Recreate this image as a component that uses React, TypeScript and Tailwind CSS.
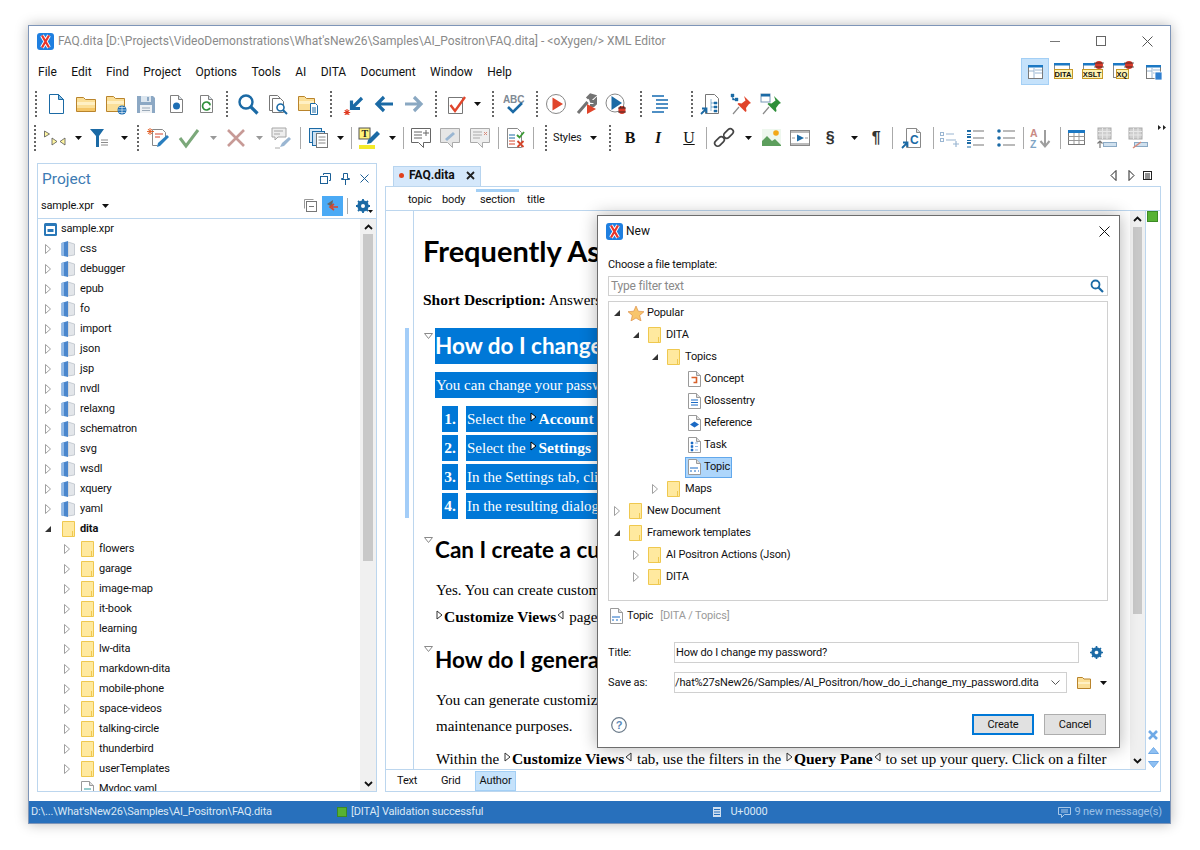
import React from "react";

type P = { children?: React.ReactNode; className?: string };
const S = ({ w = 22, h = 22, children }: { w?: number; h?: number; children?: React.ReactNode }) => (
  <svg width={w} height={h} viewBox={`0 0 ${w} ${h}`} className="block shrink-0" fill="none">{children}</svg>
);
const Cell = ({ className = "w-[30px]", children }: P) => (
  <div className={`flex items-center justify-center shrink-0 h-full ${className}`}>{children}</div>
);
const Grip = ({ className = "w-[12px]" }: P) => (
  <Cell className={className}><div className="h-[26px] border-l-2 border-dotted border-[#666]" /></Cell>
);
const Sep = ({ className = "w-[4px]" }: P) => (
  <Cell className={className}><div className="h-[22px] w-px bg-[#aaaaaa]" /></Cell>
);
const Dd = () => <svg width="7" height="4" viewBox="0 0 7 4" className="block shrink-0"><path d="M0 0h7L3.5 4z" fill="#111" /></svg>;
const DdG = () => <svg width="7" height="4" viewBox="0 0 7 4" className="block shrink-0"><path d="M0 0h7L3.5 4z" fill="#999" /></svg>;

const Logo = () => (
  <S w={17} h={17}>
    <rect width="17" height="17" rx="3" fill="#1f7fe0" />
    <path d="M5 2.500 12 14.500M12 2.500 5 14.500" stroke="#fff" strokeWidth="4" />
    <path d="M5 2.500 12 14.500M12 2.500 5 14.500" stroke="#e8352a" strokeWidth="2.200" />
  </S>
);
const Folder = () => (
  <S w={20} h={16}>
    <path d="M.5 15.500V1.500h7l2 2h10v12z" fill="#fbdf98" stroke="#b9842c" />
    <path d="M1 6h18v3H1z" fill="#fff0c4" />
    <path d="M1 12h18v3H1z" fill="#f5c667" />
  </S>
);
const Doc = ({ children, s = "#808080" }: { children?: React.ReactNode; s?: string }) => (
  <S>
    <path d="M5.500 2.500h8l4 4v13h-12z" fill="#fff" stroke={s} />
    <path d="M13.500 2.500v4h4" fill="#dbe3ea" stroke={s} />
    {children}
  </S>
);
const New = () => (
  <S>
    <path d="M4.500 1.500h9l5 5v14h-14z" fill="#fff" stroke="#1b6aa5" />
    <path d="M13.500 1.500v5h5z" fill="#8bbde0" stroke="#1b6aa5" />
  </S>
);
const FolderWeb = () => (
  <S>
    <path d="M1.500 18.500V3.500h7l2 2h9v13z" fill="#fbdf98" stroke="#b9842c" />
    <path d="M2 8h17v3H2z" fill="#fff0c4" />
    <circle cx="17" cy="17" r="4.500" fill="#1e6fb4" />
    <path d="M13 17h8M17 13v8M14 14.500h6M14 19.500h6" stroke="#fff" strokeWidth=".6" />
  </S>
);
const Save = () => (
  <S>
    <path d="M2 3h16l2 2v15H2z" fill="#8ca8c4" />
    <rect x="6" y="3" width="10" height="6" fill="#dce6ef" />
    <rect x="12" y="4" width="2" height="4" fill="#8ca8c4" />
    <rect x="5" y="12" width="12" height="8" fill="#eef1f4" />
    <path d="M7 15h8M7 17.500h8" stroke="#9aa9b8" />
  </S>
);
const Search = () => (
  <S>
    <circle cx="9" cy="9" r="6.500" stroke="#1b6aa5" strokeWidth="2.400" fill="#fff" />
    <path d="m14 14 6.500 6.500" stroke="#1b6aa5" strokeWidth="3.200" />
  </S>
);
const DocSearch = () => (
  <S>
    <path d="M2.500 2.500h8l3 3v12h-11z" fill="#fff" stroke="#777" />
    <path d="M5.500 5.500h8l3 3v11h-11z" fill="#fff" stroke="#777" />
    <circle cx="13.500" cy="14.500" r="3.500" stroke="#1b6aa5" strokeWidth="1.600" fill="#fff" />
    <path d="m16 17 4 4" stroke="#1b6aa5" strokeWidth="2" />
  </S>
);
const FolderDoc = () => (
  <S>
    <path d="M1.500 17.500V3.500h6l2 2h8v12z" fill="#fbdf98" stroke="#b9842c" />
    <path d="M2 8h15v3H2z" fill="#fff0c4" />
    <path d="M13.500 10.500h5l2 2v9h-7z" fill="#fff" stroke="#1b6aa5" />
    <path d="M15 15h4M15 17h4M15 19h4" stroke="#1b6aa5" />
  </S>
);
const ArrowIn = () => (
  <S>
    <path d="M19 5 9 15M8.500 7.500V15.500H17" stroke="#1b6aa5" strokeWidth="3.200" />
    <path d="M4 16v7M.8 19.500h6.400M1.800 17.200l4.400 4.600M6.200 17.200l-4.400 4.600" stroke="#e03a20" strokeWidth="1.100" />
  </S>
);
const ArrowH = ({ c, dir }: { c: string; dir: "l" | "r" }) => (
  <S>
    {dir === "l" ? (
      <path d="M20 11H5M11 4l-7 7 7 7" stroke={c} strokeWidth="3.200" />
    ) : (
      <path d="M2 11h15M11 4l7 7-7 7" stroke={c} strokeWidth="3.200" />
    )}
  </S>
);
const CheckDoc = () => (
  <S>
    <path d="M3.500 4.500h14v16h-14z" fill="#fff" stroke="#777" />
    <path d="m5.500 12 4.500 6 10-14" stroke="#e0452b" strokeWidth="2.400" />
  </S>
);
const Abc = () => (
  <S w={22} h={22}>
    <text x="0" y="9.500" fontFamily="Liberation Sans" fontWeight="700" fontSize="10" fill="#7f8a94">ABC</text>
    <path d="m5 14 5 5 9-9" stroke="#1b6aa5" strokeWidth="2.600" />
  </S>
);
const Play = ({ c = "#e0452b" }: { c?: string }) => (
  <S>
    <circle cx="11" cy="11" r="9.500" fill="#fff" stroke="#888" />
    <path d="M7.500 4.500 18 11 7.500 17.500z" fill={c} />
  </S>
);
const Wrench = () => (
  <S>
    <path d="M3 20 12.500 9M12 5.500 15.500 2l3.500 1-3.500 3 .8 2.300 2.500.4L21.500 6l.3 3.500-3.300 3H15" stroke="#737373" strokeWidth="3" />
    <path d="M12 11v10l9-5z" fill="#e0452b" />
  </S>
);
const PlayBug = () => (
  <S>
    <circle cx="10" cy="10" r="9" fill="#fff" stroke="#888" />
    <path d="M6.500 3 17 10 6.500 17z" fill="#1b6aa5" />
    <ellipse cx="17" cy="17" rx="3.600" ry="4" fill="#d83a2a" />
    <path d="M13 15h8M13 19h8M15 13l1 2M19 13l-1 2" stroke="#222" strokeWidth=".8" />
  </S>
);
const Indent = () => (
  <S>
    <path d="M3 3h12M7 7h12M7 11h12M7 15h12M3 19h12" stroke="#4f8fc4" strokeWidth="1.800" />
  </S>
);
const DocTree = () => (
  <S>
    <path d="M5.500 1.500h9l4 4v15h-13z" fill="#fff" stroke="#777" />
    <path d="M14 9h3v2h-3zM14 13h3v2h-3zM14 17h3v2h-3zM11 6v12M11 10h3M11 14h3" fill="#1b6aa5" stroke="#1b6aa5" strokeWidth=".5" />
    <path d="M1 21l5-5M2 15.500h4.500V20" stroke="#1b6aa5" strokeWidth="1.800" />
  </S>
);
const Pin = ({ c, top }: { c: string; top: "tree" | "win" }) => (
  <S>
    {top === "tree" ? (
      <path d="M1 1h3v3H1zM5 5h3v3H5zM2.500 4v3h3" fill="#1b6aa5" stroke="#1b6aa5" strokeWidth=".4" />
    ) : (
      <g><rect x="1" y="1" width="9" height="8" fill="#fff" stroke="#7797b6" /><rect x="1" y="1" width="9" height="2.500" fill="#1b6aa5" /></g>
    )}
    <path d="M14 3l7 7-2 1-3 4 .5 3-1 1-8-8 1-1 3 .5 4-3z" fill={c} />
    <path d="M9 14l-6 7" stroke="#8a8a8a" strokeWidth="1.200" />
  </S>
);
const Marks = () => (
  <S w={22} h={16}>
    <path d="M.5 1v6l5-3z" fill="#fff6a0" stroke="#555" strokeWidth=".8" />
    <path d="M8 8v7l5-3.500zM21 8v7l-5-3.500z" fill="#fff6a0" stroke="#555" strokeWidth=".8" />
  </S>
);
const Funnel = () => (
  <S w={24} h={20}>
    <path d="M1 1h14L10 8v11H7V8z" fill="#1b6aa5" />
    <path d="M12 12h7M12 14.500h7M12 17h7" stroke="#8a8a8a" />
  </S>
);
const EditDoc = () => (
  <S>
    <path d="M5.500 2.500h10l3 3v7M5.500 2.500v16h5" fill="#fff" stroke="#888" />
    <path d="M8 7h8M8 10h5" stroke="#d5452b" />
    <path d="m10 20 1-4 9-8 2 2-9 9z" fill="#2a7fbf" />
    <path d="M3 1v7M0 4.500h7M1 2l4 5M5 2 1 7" stroke="#e05a20" strokeWidth=".9" />
  </S>
);
const Check = ({ c }: { c: string }) => (
  <S><path d="m2 11 6 8L20 3" stroke={c} strokeWidth="3" /></S>
);
const Cross = ({ c }: { c: string }) => (
  <S><path d="m3 3 16 16M19 3 3 19" stroke={c} strokeWidth="2.600" /></S>
);
const CommentEdit = () => (
  <S>
    <path d="M1 1h14v9H7l-3 3v-3H1z" fill="#eee" stroke="#a6a6a6" />
    <path d="M3 4h9M3 7h6" stroke="#a6a6a6" />
    <path d="m9 20 2-4 7-6 2 2-7 7z" fill="#9ab6d2" />
    <path d="M4 21h5" stroke="#aaa" />
  </S>
);
const Copy = () => (
  <S>
    <rect x="1.500" y="1.500" width="12" height="14" fill="#dbe9f6" stroke="#1b6aa5" />
    <rect x="4.500" y="4.500" width="12" height="14" fill="#cfe2f3" stroke="#1b6aa5" />
    <rect x="8.500" y="6.500" width="11" height="14" fill="#fff" stroke="#777" />
    <path d="M10.500 10h7M10.500 13h7M10.500 16h7" stroke="#888" />
  </S>
);
const Highlight = () => (
  <S w={24} h={22}>
    <rect x="1" y="1" width="11" height="11" fill="#fff27a" stroke="#555" />
    <text x="3.500" y="10" fontFamily="Liberation Serif" fontWeight="700" fontSize="10" fill="#222">T</text>
    <path d="m9 17 1-4 9-9 3 3-9 9z" fill="#1b6aa5" />
    <rect x="1" y="18" width="16" height="4" fill="#f3ea2a" />
  </S>
);
const CommentBubble = ({ fill = "#fff", s = "#666", children }: { fill?: string; s?: string; children?: React.ReactNode }) => (
  <S>
    <path d="M1.500 1.500h19v14h-7v5l-5-5h-7z" fill={fill} stroke={s} />
    {children}
  </S>
);
const Review = () => (
  <S>
    <path d="M3.500 1.500h10l4 4v15h-14z" fill="#fff" stroke="#888" />
    <path d="M5 8h6M5 11h6" stroke="#1b6aa5" />
    <path d="M5 14h6M5 17h6" stroke="#d5452b" />
    <path d="m13 8 2.500 2.500L20 5" stroke="#3a9a35" strokeWidth="1.800" />
    <path d="m13.500 14 6 6M19.500 14l-6 6" stroke="#d5452b" strokeWidth="1.800" />
  </S>
);
const Link = () => (
  <S>
    <rect x="1" y="11.500" width="11" height="6" rx="3" transform="rotate(-45 6.500 14.500)" stroke="#444" strokeWidth="1.700" />
    <rect x="10" y="3.500" width="11" height="6" rx="3" transform="rotate(-45 15.500 6.500)" stroke="#444" strokeWidth="1.700" />
  </S>
);
const Img = () => (
  <S>
    <rect x="1" y="2" width="19" height="17" fill="#eef7ee" />
    <path d="M1 19v-5l5-5 5 5 3-2 6 6v1z" fill="#5c9e5c" />
    <circle cx="15" cy="6" r="2.800" fill="#f3a818" />
  </S>
);
const Video = () => (
  <S>
    <rect x="1.500" y="3.500" width="19" height="15" fill="#fff" stroke="#888" />
    <path d="M2 4h18v2H2zM2 16h18v2H2z" fill="#bbb" />
    <path d="m8 7.500 7 3.500-7 3.500z" fill="#1b6aa5" />
    <path d="M3 11h3M16 11h3" stroke="#999" />
  </S>
);
const DocC = () => (
  <S>
    <path d="M5.500 1.500h10l4 4v15h-14z" fill="#fff" stroke="#888" />
    <path d="M15.500 1.500v4h4" fill="#ddd" stroke="#888" />
    <text x="9" y="16.500" fontFamily="Liberation Sans" fontWeight="700" fontSize="12" fill="#1b6aa5">C</text>
    <path d="M1 21l5-5M2 15.500h4.500V20" stroke="#1b6aa5" strokeWidth="1.800" />
  </S>
);
const ListAdd = () => (
  <S>
    <rect x="2.500" y="5.500" width="3" height="3" stroke="#9ab6d2" />
    <rect x="2.500" y="11.500" width="3" height="3" stroke="#9ab6d2" />
    <path d="M8 7h8M8 13h10M15 17h6M18 14v6" stroke="#9ab6d2" strokeWidth="1.200" />
  </S>
);
const Ol = () => (
  <S>
    <path d="M2 3h4v2H2zM2 9h4v2H2zM2 15h4v2H2z" fill="#1b6aa5" />
    <path d="M8 4h11M8 11h11M8 18h11" stroke="#777" strokeWidth="1.200" />
    <path d="M2 7.500h4M2 13.500h4M2 20h4" stroke="#1b6aa5" />
  </S>
);
const Ul = () => (
  <S>
    <circle cx="4" cy="4" r="1.800" fill="#1b6aa5" />
    <circle cx="4" cy="11" r="1.800" fill="#1b6aa5" />
    <circle cx="4" cy="18" r="1.800" fill="#1b6aa5" />
    <path d="M8 4h12M8 11h12M8 18h12" stroke="#777" strokeWidth="1.200" />
  </S>
);
const Sort = () => (
  <S>
    <text x="1" y="9.500" fontFamily="Liberation Sans" fontWeight="700" fontSize="10.500" fill="#c98a84">A</text>
    <text x="1" y="20.500" fontFamily="Liberation Sans" fontWeight="700" fontSize="10.500" fill="#7ea4c4">Z</text>
    <path d="M16 3v16M11.500 14l4.500 5.500 4.500-5.500" stroke="#9e9e9e" strokeWidth="2" />
  </S>
);
const Table = () => (
  <S>
    <rect x="2.500" y="3.500" width="16" height="14" fill="#fff" stroke="#777" />
    <rect x="2" y="3" width="17" height="3" fill="#1b78c4" />
    <path d="M2.500 9.500h16M2.500 13.500h16M8 6v11M13 6v11" stroke="#999" />
  </S>
);
const TblGray = ({ bar }: { bar: "add" | "del" }) => (
  <S>
    <rect x="2" y="1" width="13" height="11" fill="#cfcfcf" stroke="#aaa" />
    <path d="M2 4.500h13M2 8h13M6.500 1v11M11 1v11" stroke="#e8e8e8" />
    <rect x="7.500" y="15.500" width="13" height="4" fill="#cfe0ee" stroke="#8aa9c4" />
    {bar === "add" ? (
      <path d="M4 21v-7M1.500 16.500 4 14l2.500 2.500" stroke="#777" strokeWidth="1.200" />
    ) : (
      <path d="m6 21 8-6" stroke="#d98a7a" strokeWidth="1.500" />
    )}
  </S>
);
const Persp = ({ db }: { db?: boolean }) => (
  <S w={20} h={18}>
    <rect x="3.500" y="2.500" width="14" height="13" fill="#fff" stroke="#7a7a7a" />
    <rect x="3" y="2" width="15" height="2.500" fill="#1b78c4" />
    <path d="M9 5v10M10 7h7M10 10h7M4 8h5" stroke="#9ab6d2" />
    {db && <path d="M12 9h7v8h-7z" fill="#2f7fd0" stroke="#fff" strokeWidth=".8" />}
  </S>
);
const Label = ({ t, w, bug }: { t: string; w: number; bug?: boolean }) => (
  <svg width="30" height="22" viewBox="0 0 30 22" className="block shrink-0 tracking-normal" fill="none">
    <rect x="6.500" y="2.500" width="15" height="14" fill="#fff" stroke="#888" />
    <rect x="6" y="2" width="16" height="2.500" fill="#1b78c4" />
    <rect x={15 - w / 2 + .5} y="8.500" width={w} height="9" fill="#fff2b0" stroke="#c79a28" />
    <text x="15" y="16" textAnchor="middle" fontFamily="Liberation Sans" fontWeight="700" fontSize="7.500" fill="#111">{t}</text>
    {bug && <g><ellipse cx="22" cy="4" rx="4" ry="4" fill="#d83a2a" /><path d="M17 2h10M17 6h10" stroke="#222" strokeWidth=".7" /></g>}
  </svg>
);

const TreeArrow = ({ open }: { open?: boolean }) =>
  open ? (
    <svg width="10" height="10" viewBox="0 0 10 10" className="block shrink-0"><path d="M8 2v6H2z" fill="#333" /></svg>
  ) : (
    <svg width="10" height="12" viewBox="0 0 10 12" className="block shrink-0"><path d="M2.500 1.500v9l5-4.500z" fill="#fff" stroke="#a0a0a0" /></svg>
  );
const BlueFolder = () => (
  <svg width="14" height="16" viewBox="0 0 14 16" className="block shrink-0">
    <path d="M7 1 13.500 3v11L7 15z" fill="#e3e6ea" stroke="#b5bcc4" strokeWidth=".7" />
    <path d="M.5 2 7 0v16L.5 14.500z" fill="#4a86cc" />
    <path d="M.5 2 3 1.300v13.800L.5 14.500z" fill="#8fb8e6" />
  </svg>
);
const YFolder = () => (
  <svg width="13" height="16" viewBox="0 0 13 16" className="block shrink-0">
    <path d="M.5.500h12v15H.5z" fill="#ffe99f" stroke="#efc84f" />
    <path d="M10.500 10v5.500" stroke="#efc84f" />
  </svg>
);
const MiniDoc = ({ children }: P) => (
  <svg width="13" height="16" viewBox="0 0 13 16" className="block shrink-0" fill="none">
    <path d="M.5.500h8l4 4v11H.5z" fill="#fff" stroke="#9a9a9a" />
    <path d="M8.500.500v4h4" fill="#ddd" stroke="#9a9a9a" />
    {children}
  </svg>
);

const folders = ["css","debugger","epub","fo","import","json","jsp","nvdl","relaxng","schematron","svg","wsdl","xquery","yaml"];
const subs = ["flowers","garage","image-map","it-book","learning","lw-dita","markdown-dita","mobile-phone","space-videos","talking-circle","thunderbird","userTemplates"];

const Mk = ({ dir = "r", fill = "#fff", s = "#333" }: { dir?: "l" | "r"; fill?: string; s?: string }) => (
  <svg width="7" height="11" viewBox="0 0 7 11" className="inline-block align-[1px] mx-[1px]">
    <path d={dir === "r" ? "M1 1v8l5-4z" : "M6 1v8L1 5z"} fill={fill} stroke={s} />
  </svg>
);
const Tri = () => (
  <div className="w-[11px] shrink-0 pt-[5px]">
    <svg width="9" height="6" viewBox="0 0 9 6" className="block"><path d="M.5.500h8L4.500 5.500z" fill="#fff" stroke="#8a8a8a" /></svg>
  </div>
);
const Num = ({ n, children }: { n: string; children: React.ReactNode }) => (
  <div className="flex h-[26px] ml-[19px] text-white leading-[26px] whitespace-nowrap">
    <div className="w-[16px] bg-[#0078d7] font-bold text-[15.500px] shrink-0 text-center">{n}</div>
    <div className="ml-[8px] w-[500px] bg-[#0078d7] pl-px">{children}</div>
  </div>
);

export default function App() {
  const ui = "font-['Segoe_UI','Roboto',sans-serif]";
  const h = "font-['Lato',sans-serif] font-bold";
  return (
    <div className={`relative w-[1200px] h-[850px] bg-white pt-[25px] pl-[28px] overflow-hidden text-[11px] leading-[18px] tracking-[-0.15px] text-[#111] ${ui}`}>
      <div className="w-[1143px] h-[799px] border border-[#7e95b8] bg-white flex flex-col shadow-[0_0_12px_rgba(0,0,0,0.28)]">
        {/* title */}
        <div className="h-[30px] flex items-center shrink-0 pl-[8px]">
          <Logo />
          <span className="ml-[4px] text-[12px] tracking-normal text-[#8a8a8a] whitespace-nowrap">FAQ.dita [D:\Projects\VideoDemonstrations\What'sNew26\Samples\AI_Positron\FAQ.dita] - &lt;oXygen/&gt; XML Editor</span>
          <div className="ml-auto flex items-center h-full">
            <Cell className="w-[46px]"><div className="w-[10px] h-px bg-[#777]" /></Cell>
            <Cell className="w-[46px]"><div className="w-[10px] h-[10px] border border-[#666]" /></Cell>
            <Cell className="w-[46px]"><svg width="11" height="11" viewBox="0 0 11 11"><path d="m.5.500 10 10M10.500.500l-10 10" stroke="#555" /></svg></Cell>
          </div>
        </div>
        {/* menu */}
        <div className="h-[31px] flex items-center shrink-0 pl-[9px] relative">
          <div className="flex gap-[14.400px] text-[12px] tracking-normal">
            {["File","Edit","Find","Project","Options","Tools","AI","DITA","Document","Window","Help"].map((m) => <span key={m}>{m}</span>)}
          </div>
          <div className="ml-auto flex items-center h-full pr-[2px]">
            <div className="w-[28px] h-[27px] bg-[#c5e2fb] border border-[#a3cff5] flex items-center justify-center"><Persp /></div>
            <Cell className="w-[28px]"><Label t="DITA" w={18} /></Cell>
            <Cell className="w-[30px]"><Label t="XSLT" w={20} bug /></Cell>
            <Cell className="w-[30px]"><Label t="XQ" w={12} bug /></Cell>
            <Cell className="w-[31px]"><Persp db /></Cell>
          </div>
        </div>
        {/* toolbar 1 */}
        <div className="h-[30px] mt-[2px] flex items-center shrink-0 pl-[2px]">
          <Grip className="w-[10px]" />
          <Cell><New /></Cell>
          <Cell><Folder /></Cell>
          <Cell><FolderWeb /></Cell>
          <Cell><Save /></Cell>
          <Cell><Doc><circle cx="11.500" cy="13" r="3.500" fill="#1e6fb4" /></Doc></Cell>
          <Cell><Doc><path d="M15 11a4 4 0 1 0 0 4" stroke="#2f8f3a" strokeWidth="1.700" /><path d="m13 10 3 1-1 2z" fill="#2f8f3a" /></Doc></Cell>
          <Grip />
          <Cell><Search /></Cell>
          <Cell><DocSearch /></Cell>
          <Cell><FolderDoc /></Cell>
          <Grip className="w-[16px]" />
          <Cell><ArrowIn /></Cell>
          <Cell><ArrowH c="#1b6aa5" dir="l" /></Cell>
          <Cell><ArrowH c="#8aa8c2" dir="r" /></Cell>
          <Grip className="w-[14px]" />
          <Cell className="w-[26px]"><CheckDoc /></Cell>
          <Cell className="w-[16px]"><Dd /></Cell>
          <Grip className="w-[16px]" />
          <Cell className="w-[26px]"><Abc /></Cell>
          <Grip className="w-[8px] ml-[6px]" />
          <Cell><Play /></Cell>
          <Cell><Wrench /></Cell>
          <Cell><PlayBug /></Cell>
          <Grip className="w-[9px] ml-[5px]" />
          <Cell><Indent /></Cell>
          <Grip className="w-[9px] ml-[12px]" />
          <Cell><DocTree /></Cell>
          <Cell><Pin c="#e0452b" top="tree" /></Cell>
          <Cell><Pin c="#2f8f3a" top="win" /></Cell>
        </div>
        {/* toolbar 2 */}
        <div className="h-[30px] mt-[4px] flex items-center shrink-0 pl-[1px]">
          <Grip className="w-[10px]" />
          <Cell className="w-[30px]"><Marks /></Cell>
          <Cell className="w-[16px]"><Dd /></Cell>
          <Cell className="w-[30px]"><Funnel /></Cell>
          <Cell className="w-[17px]"><Dd /></Cell>
          <Grip className="w-[10px]" />
          <Cell className="w-[30px]"><EditDoc /></Cell>
          <Cell className="w-[32px]"><Check c="#7ba87a" /></Cell>
          <Cell className="w-[16px]"><DdG /></Cell>
          <Cell className="w-[29px]"><Cross c="#c79a96" /></Cell>
          <Cell className="w-[18px]"><DdG /></Cell>
          <Cell className="w-[28px]"><CommentEdit /></Cell>
          <Sep className="w-[8px]" />
          <Cell className="w-[30px]"><Copy /></Cell>
          <Cell className="w-[12px]"><Dd /></Cell>
          <Sep className="w-[10px]" />
          <Cell className="w-[28px]"><Highlight /></Cell>
          <Cell className="w-[16px]"><Dd /></Cell>
          <Sep className="w-[6px]" />
          <Cell className="w-[29px]"><CommentBubble><path d="M4 5h8M4 8h8M4 11h8M16 3v6M13 6h6" stroke="#666" /></CommentBubble></Cell>
          <Cell><CommentBubble fill="#e6e6e6" s="#aaa"><path d="m6 12 8-7 2 2-8 7z" fill="#9ab6d2" /></CommentBubble></Cell>
          <Cell><CommentBubble fill="#eee" s="#aaa"><path d="M4 5h9M4 8h9M4 11h7" stroke="#aaa" /><path d="m15 5 3 3M18 5l-3 3" stroke="#d98a7a" /></CommentBubble></Cell>
          <Sep className="w-[6px]" />
          <Cell className="w-[28px]"><Review /></Cell>
          <Sep className="w-[8px]" />
          <Grip className="w-[18px]" />
          <Cell className="w-[33px] -ml-[2px] justify-start"><span>Styles</span></Cell>
          <Cell className="w-[14px]"><Dd /></Cell>
          <Grip className="w-[20px]" />
          <Cell className="w-[20px]"><span className="font-['Liberation_Serif',serif] font-bold text-[16px]">B</span></Cell>
          <Cell className="w-[36px]"><span className="font-['Liberation_Serif',serif] italic text-[16px] font-semibold">I</span></Cell>
          <Cell className="w-[26px]"><span className="font-['Liberation_Serif',serif] underline text-[16px]">U</span></Cell>
          <Sep className="w-[8px]" />
          <Cell className="w-[28px]"><Link /></Cell>
          <Cell className="w-[20px]"><Dd /></Cell>
          <Cell className="w-[27px]"><Img /></Cell>
          <Cell><Video /></Cell>
          <Cell className="w-[30px]"><span className="font-['Liberation_Sans',sans-serif] font-bold text-[16px] text-[#333]">§</span></Cell>
          <Cell className="w-[18px]"><Dd /></Cell>
          <Cell className="w-[26px]"><span className="font-['Liberation_Sans',sans-serif] font-bold text-[16px] text-[#333]">¶</span></Cell>
          <Sep className="w-[6px]" />
          <Cell className="w-[34px]"><DocC /></Cell>
          <Sep className="w-[8px]" />
          <Cell className="w-[24px]"><ListAdd /></Cell>
          <Cell><Ol /></Cell>
          <Cell><Ul /></Cell>
          <Sep className="w-[4px]" />
          <Cell className="w-[30px]"><Sort /></Cell>
          <Sep className="w-[10px]" />
          <Cell className="w-[24px]"><Table /></Cell>
          <Cell className="w-[36px]"><TblGray bar="add" /></Cell>
          <Cell className="w-[26px]"><TblGray bar="del" /></Cell>
          <Cell className="w-[22px] items-start"><svg width="8" height="5" viewBox="0 0 8 5" className="mt-[2px]"><path d="M0 0v5l3-2.500zM5 0v5l3-2.500z" fill="#222" /></svg></Cell>
        </div>
        {/* main */}
        <div className="flex-1 min-h-0 flex mt-[10px] pb-[9px] pl-[8px]">
          {/* project */}
          <div className="w-[340px] h-full border border-[#bcd6ee] flex flex-col shrink-0">
            <div className="h-[29px] flex items-center pl-[4px] shrink-0">
              <span className="text-[15.500px] tracking-normal text-[#3d7bb3]">Project</span>
              <div className="ml-auto flex items-center gap-[9px] pr-[7px]">
                <svg width="11" height="11" viewBox="0 0 11 11" fill="none"><rect x=".5" y="3.500" width="7" height="7" stroke="#1b5f96" /><path d="M3.500 2V.5h7v7H9" stroke="#1b5f96" /></svg>
                <svg width="11" height="12" viewBox="0 0 11 12" fill="none"><path d="M3.500.5h4v5h2v1h-8v-1h2zM5.500 7v5" stroke="#1b5f96" /></svg>
                <svg width="9" height="9" viewBox="0 0 9 9" fill="none"><path d="m.5.500 8 8M8.500.500l-8 8" stroke="#1b5f96" /></svg>
              </div>
            </div>
            <div className="h-[26px] flex items-center pl-[3px] border-b border-[#bcd6ee] shrink-0">
              <span>sample.xpr</span>
              <span className="ml-[8px]"><Dd /></span>
              <div className="ml-auto flex items-center pr-[3px]">
                <svg width="13" height="13" viewBox="0 0 13 13" fill="none"><path d="M.5 9.500V.5h9" stroke="#999" /><rect x="2.500" y="2.500" width="10" height="10" fill="#fff" stroke="#777" /><path d="M5 7.500h5" stroke="#777" /></svg>
                <div className="ml-[5px] w-[21px] h-[20px] bg-[#4baaf5] flex items-center justify-center">
                  <svg width="13" height="13" viewBox="0 0 13 13"><path d="M7 1 1 5l5 3z" fill="#666" /><path d="M12 8H6M8 5 4 8l4 3" stroke="#d8452b" strokeWidth="1.600" fill="none" /></svg>
                </div>
                <div className="ml-[4px] h-[16px] w-px bg-[#aaa]" />
                <div className="ml-[8px] w-[17px] relative">
                  <svg width="17" height="14" viewBox="0 0 17 14"><circle cx="7" cy="7" r="4" fill="none" stroke="#1b6aa5" strokeWidth="3.500" /><path d="M7 0v14M0 7h14M2 2l10 10M12 2 2 12" stroke="#1b6aa5" strokeWidth="1.800" /><circle cx="7" cy="7" r="2" fill="#fff" /><path d="M12 11h5l-2.500 3z" fill="#111" /></svg>
                </div>
              </div>
            </div>
            <div className="flex-1 min-h-0 flex">
              <div className="flex-1 min-w-0 overflow-hidden">
                <div className="h-[20px] flex items-center pl-[6px]">
                  <svg width="13" height="13" viewBox="0 0 13 13" className="shrink-0"><rect width="13" height="13" rx="1.500" fill="#2a78b8" /><rect x="2" y="3" width="9" height="8" fill="#fff" /><rect x="3.500" y="6" width="6" height="3" fill="#2a78b8" /></svg>
                  <span className="ml-[4px]">sample.xpr</span>
                </div>
                {folders.map((f) => (
                  <div key={f} className="h-[20px] flex items-center pl-[5px]">
                    <TreeArrow />
                    <div className="ml-[8px]"><BlueFolder /></div>
                    <span className="ml-[5px]">{f}</span>
                  </div>
                ))}
                <div className="h-[20px] flex items-center pl-[5px]">
                  <TreeArrow open />
                  <div className="ml-[9px]"><YFolder /></div>
                  <span className="ml-[5px] font-bold">dita</span>
                </div>
                {subs.map((f) => (
                  <div key={f} className="h-[20px] flex items-center pl-[24px]">
                    <TreeArrow />
                    <div className="ml-[9px]"><YFolder /></div>
                    <span className="ml-[5px]">{f}</span>
                  </div>
                ))}
                <div className="h-[20px] flex items-center pl-[43px]">
                  <MiniDoc><path d="M3 8h7M3 10.500h7M3 13h7" stroke="#2a9a9a" /></MiniDoc>
                  <span className="ml-[5px]">Mydoc.yaml</span>
                </div>
              </div>
              <div className="w-[16px] bg-[#f0f0f0] flex flex-col items-center shrink-0">
                <div className="h-[15px] flex items-center"><svg width="9" height="6" viewBox="0 0 9 6"><path d="m1 5 3.500-3.500L8 5" fill="none" stroke="#111" strokeWidth="1.800" /></svg></div>
                <div className="w-[10px] h-[327px] bg-[#c8c8c8]" />
                <div className="mt-auto h-[15px] flex items-center"><svg width="9" height="6" viewBox="0 0 9 6"><path d="m1 1 3.500 3.500L8 1" fill="none" stroke="#111" strokeWidth="1.800" /></svg></div>
              </div>
            </div>
          </div>
          {/* editor */}
          <div className="ml-[8px] w-[776px] h-full flex flex-col shrink-0">
            <div className="h-[23px] shrink-0 flex pl-[8px]">
              <div className="mt-[3px] w-[88px] h-[20px] bg-[#d5e8fb] border border-b-0 border-[#b7d4ef] flex items-center pl-[5px] pb-[3px]">
                <div className="w-[5px] h-[5px] rounded-full bg-[#e0401c]" />
                <span className="ml-[5px] font-bold text-[12px] tracking-normal">FAQ.dita</span>
                <svg width="9" height="9" viewBox="0 0 9 9" className="ml-[11px]"><path d="m1 1 7 7M8 1 1 8" stroke="#222" strokeWidth="1.800" /></svg>
              </div>
              <div className="ml-auto flex items-center pr-[9px] pt-[1px]">
                <svg width="7" height="11" viewBox="0 0 7 11"><path d="M6 .5v10L1 5.500z" fill="#fff" stroke="#222" /></svg>
                <svg width="7" height="11" viewBox="0 0 7 11" className="ml-[11px]"><path d="M1 .5v10L6 5.500z" fill="#fff" stroke="#222" /></svg>
                <svg width="9" height="9" viewBox="0 0 9 9" fill="none" className="ml-[8px]"><rect x=".5" y=".5" width="8" height="8" stroke="#222" /><path d="M2 3h5M2 5h5M2 7h5" stroke="#222" /></svg>
              </div>
            </div>
            <div className="flex-1 min-h-0 border border-[#bcd6ee] flex flex-col">
              <div className="h-[24px] shrink-0 border-b border-[#bcd6ee] flex items-end pl-[22px] pb-[1px]">
                <span className="w-[34px]">topic</span>
                <span className="w-[34px]">body</span>
                <div className="w-[43px] flex flex-col items-center relative">
                  <div className="absolute -top-[2px] left-0 w-[43px] h-[3px] bg-[#a3cff5]" />
                  <span>section</span>
                </div>
                <span className="ml-[8px]">title</span>
              </div>
              <div className="flex-1 min-h-0 flex">
                <div className="flex-1 min-w-0 flex border-r border-[#bcd6ee] border-b">
                  <div className="flex-1 min-w-0 flex overflow-hidden">
                    <div className="w-[28px] shrink-0 border-r border-[#bcd6ee]">
                      <div className="ml-[19px] mt-[117px] w-[4px] h-[190px] bg-[#a3cdf8]" />
                    </div>
                    <div className="flex-1 min-w-0 pl-[10px] font-['Liberation_Serif',serif] text-[15px] [&_b]:text-[15.500px] tracking-normal text-black whitespace-nowrap overflow-hidden">
                      <div className={`mt-[23px] -ml-px h-[34px] leading-[34px] text-[29px] ${h}`}>Frequently Asked Questions</div>
                      <div className="mt-[22px] -ml-px h-[20px] leading-[20px]"><b>Short Description:</b> Answers to common questions.</div>
                      <div className="mt-[18px] flex">
                        <Tri />
                        <div className={`w-[500px] h-[36px] leading-[35px] bg-[#0078d7] text-white text-[22.500px] ${h}`}>How do I change my password?</div>
                      </div>
                      <div className="mt-[8px] ml-[11px] w-[500px] h-[26px] leading-[26px] bg-[#0078d7] text-white pl-px">You can change your password.</div>
                      <div className="mt-[8px] -ml-px"><Num n="1."><>Select the <Mk fill="#fff" s="#000" /><b>Account</b></></Num></div>
                      <div className="mt-[3px] -ml-px"><Num n="2."><>Select the <Mk fill="#fff" s="#000" /><b>Settings</b></></Num></div>
                      <div className="mt-[3px] -ml-px"><Num n="3."><>In the Settings tab, click</></Num></div>
                      <div className="mt-[3px] -ml-px"><Num n="4."><>In the resulting dialog</></Num></div>
                      <div className="mt-[13px] flex">
                        <Tri />
                        <div className={`h-[36px] leading-[36px] text-[22.500px] ${h}`}>Can I create a custom view?</div>
                      </div>
                      <div className="mt-[9px] ml-[12px] h-[26px] leading-[26px]">Yes. You can create custom views.</div>
                      <div className="ml-[11px] h-[27px] leading-[27px]"><Mk /><b>Customize Views</b><Mk dir="l" /> page</div>
                      <div className="mt-[11px] flex">
                        <Tri />
                        <div className={`h-[36px] leading-[37px] text-[22.500px] ${h}`}>How do I generate a report?</div>
                      </div>
                      <div className="mt-[10px] ml-[12px] h-[26px] leading-[26px]">You can generate customized reports for</div>
                      <div className="ml-[12px] h-[27px] leading-[27px]">maintenance purposes.</div>
                      <div className="mt-[6px] ml-[12px] h-[26px] leading-[26px]">Within the <Mk /><b>Customize Views</b><Mk dir="l" /> tab, use the filters in the <Mk /><b>Query Pane</b><Mk dir="l" /> to set up your query. Click on a filter</div>
                    </div>
                  </div>
                  <div className="w-[15px] bg-[#f0f0f0] flex flex-col items-center shrink-0">
                    <div className="h-[16px] flex items-center"><svg width="9" height="6" viewBox="0 0 9 6"><path d="m1 5 3.500-3.500L8 5" fill="none" stroke="#111" strokeWidth="1.800" /></svg></div>
                    <div className="w-[9px] h-[387px] bg-[#c8c8c8]" />
                    <div className="mt-auto h-[16px] flex items-center"><svg width="9" height="6" viewBox="0 0 9 6"><path d="m1 1 3.500 3.500L8 1" fill="none" stroke="#111" strokeWidth="1.800" /></svg></div>
                  </div>
                </div>
                <div className="w-[14px] shrink-0 flex flex-col items-center">
                  <div className="w-[11px] h-[11px] bg-[#57b233] border border-[#3c8a25] -ml-px" />
                  <div className="mt-auto mb-[2px] flex flex-col items-center gap-[7px]">
                    <svg width="10" height="10" viewBox="0 0 10 10"><path d="m1 1 8 8M9 1 1 9" stroke="#6fa9e6" strokeWidth="2.600" /></svg>
                    <svg width="11" height="7" viewBox="0 0 11 7"><path d="M.5 6.500h10L5.500.5z" fill="#8fc0f2" stroke="#6fa9e6" /></svg>
                    <svg width="11" height="7" viewBox="0 0 11 7"><path d="M.5.500h10L5.500 6.500z" fill="#8fc0f2" stroke="#6fa9e6" /></svg>
                  </div>
                </div>
              </div>
              <div className="h-[21px] shrink-0 flex items-center">
                <span className="ml-[11px] w-[44px]">Text</span>
                <span className="w-[34px]">Grid</span>
                <div className="h-[20px] w-[41px] bg-[#c5e2fb] border border-[#a3cff5] flex items-center justify-center">Author</div>
              </div>
            </div>
          </div>
        </div>
        {/* status */}
        <div className="h-[22px] shrink-0 bg-[#2870bc] text-[#dbe8f5] flex items-center pl-[2px] whitespace-nowrap">
          <span className="w-[306px] shrink-0">D:\...\What'sNew26\Samples\AI_Positron\FAQ.dita</span>
          <div className="w-[10px] h-[10px] bg-[#57b233] border border-[#3c8a25]" />
          <span className="ml-[4px]">[DITA] Validation successful</span>
          <svg width="8" height="10" viewBox="0 0 8 10" className="ml-[230px]"><rect width="8" height="10" fill="#cfdff0" /><path d="M1 2.500h6M1 5h6M1 7.500h6" stroke="#2870bc" /></svg>
          <span className="ml-[9px]">U+0000</span>
          <svg width="13" height="11" viewBox="0 0 13 11" className="ml-auto"><path d="M.5.500h12v7h-6l-3 3v-3h-3z" fill="none" stroke="#a9c8e8" /><path d="M3 3h7M3 5h7" stroke="#a9c8e8" /></svg>
          <span className="ml-[3px] mr-[8px] text-[#9cc0e6]">9 new message(s)</span>
        </div>
      </div>

      {/* New dialog */}
      <div className="absolute left-[597px] top-[215px] w-[523px] h-[533px] bg-white border border-[#6d6d6d] shadow-[0_0_16px_rgba(0,0,0,0.3)] flex flex-col px-[10px]">
        <div className="h-[30px] shrink-0 flex items-center -mr-[2px]">
          <div className="-ml-[2px]"><Logo /></div>
          <span className="ml-[3px] text-[12px] tracking-normal">New</span>
          <svg width="11" height="11" viewBox="0 0 11 11" className="ml-auto mr-px"><path d="m.5.500 10 10M10.500.500l-10 10" stroke="#111" /></svg>
        </div>
        <div className="mt-[10px] h-[16px] shrink-0">Choose a file template:</div>
        <div className="mt-[4px] h-[20px] w-[500px] shrink-0 border border-[#d0d0d0] flex items-center px-[2px]">
          <span className="text-[#8a8a8a] text-[12px] tracking-[-0.2px]">Type filter text</span>
          <svg width="14" height="14" viewBox="0 0 14 14" className="ml-auto mr-px" fill="none"><circle cx="5.500" cy="5.500" r="4" stroke="#1b6aa5" strokeWidth="1.800" /><path d="m8.500 8.500 4.500 4.500" stroke="#1b6aa5" strokeWidth="2.200" /></svg>
        </div>
        <div className="mt-[5px] h-[300px] w-[500px] shrink-0 border border-[#d0d0d0]">
          <div className="h-[22px] flex items-center pl-[3px]">
            <TreeArrow open />
            <svg width="16" height="15" viewBox="0 0 16 15" className="ml-[6px] shrink-0"><path d="m8 0 2.300 5.200 5.700.5-4.300 3.700 1.300 5.600L8 12l-5 3 1.300-5.600L0 5.700l5.700-.5z" fill="#f8c56c" stroke="#d8843a" strokeWidth=".6" /></svg>
            <span className="ml-[3px]">Popular</span>
          </div>
          <div className="h-[22px] flex items-center pl-[22px]">
            <TreeArrow open />
            <div className="ml-[7px]"><YFolder /></div>
            <span className="ml-[5px]">DITA</span>
          </div>
          <div className="h-[22px] flex items-center pl-[41px]">
            <TreeArrow open />
            <div className="ml-[7px]"><YFolder /></div>
            <span className="ml-[5px]">Topics</span>
          </div>
          <div className="h-[22px] flex items-center pl-[79px]">
            <MiniDoc><path d="M3.500 6.500h5v5h-3" stroke="#d8602a" strokeWidth="1.600" /></MiniDoc>
            <span className="ml-[3px]">Concept</span>
          </div>
          <div className="h-[22px] flex items-center pl-[79px]">
            <MiniDoc><path d="M3 7h7M3 9.500h7M3 12h7" stroke="#1b6ac4" /></MiniDoc>
            <span className="ml-[3px]">Glossentry</span>
          </div>
          <div className="h-[22px] flex items-center pl-[79px]">
            <MiniDoc><path d="M2 9.500 6.500 6.500 11 9.500 6.500 12.500z" fill="#1b6ac4" /></MiniDoc>
            <span className="ml-[3px]">Reference</span>
          </div>
          <div className="h-[22px] flex items-center pl-[79px]">
            <MiniDoc><path d="M3 5h2v2H3zM3 8.500h2v2H3zM3 12h2v2H3zM7 6h3M7 9.500h3M7 13h3" fill="#1b6ac4" stroke="#1b6ac4" strokeWidth=".5" /></MiniDoc>
            <span className="ml-[3px]">Task</span>
          </div>
          <div className="h-[22px] flex items-center pl-[76px]">
            <div className="h-[21px] w-[47px] bg-[#aed6fb] border border-[#62a8ec] flex items-center pl-[2px]">
              <MiniDoc><path d="M2 9h8M2 12h2M6 12h2M10 12h1" stroke="#1b6ac4" /></MiniDoc>
              <span className="ml-[3px]">Topic</span>
            </div>
          </div>
          <div className="h-[22px] flex items-center pl-[41px]">
            <TreeArrow />
            <div className="ml-[7px]"><YFolder /></div>
            <span className="ml-[5px]">Maps</span>
          </div>
          <div className="h-[22px] flex items-center pl-[3px]">
            <TreeArrow />
            <div className="ml-[7px]"><YFolder /></div>
            <span className="ml-[5px]">New Document</span>
          </div>
          <div className="h-[22px] flex items-center pl-[3px]">
            <TreeArrow open />
            <div className="ml-[7px]"><YFolder /></div>
            <span className="ml-[5px]">Framework templates</span>
          </div>
          <div className="h-[22px] flex items-center pl-[22px]">
            <TreeArrow />
            <div className="ml-[7px]"><YFolder /></div>
            <span className="ml-[5px]">AI Positron Actions (Json)</span>
          </div>
          <div className="h-[22px] flex items-center pl-[22px]">
            <TreeArrow />
            <div className="ml-[7px]"><YFolder /></div>
            <span className="ml-[5px]">DITA</span>
          </div>
        </div>
        <div className="mt-[5px] h-[20px] flex items-center shrink-0 pl-[2px]">
          <MiniDoc><path d="M2 9h8M2 12h2M6 12h2M10 12h1" stroke="#1b6ac4" /></MiniDoc>
          <span className="ml-[4px]">Topic</span>
          <span className="ml-[7px] text-[#9a9a9a]">[DITA / Topics]</span>
        </div>
        <div className="mt-[16px] h-[21px] flex items-center shrink-0">
          <span className="w-[66px]">Title:</span>
          <div className="w-[405px] h-full border border-[#d0d0d0] flex items-center pl-px">How do I change my password?</div>
          <svg width="13" height="13" viewBox="0 0 13 13" className="ml-[11px]" fill="none"><circle cx="6.500" cy="6.500" r="3.700" stroke="#1b6aa5" strokeWidth="3" /><path d="M6.500 0v13M0 6.500h13M2 2l9 9M11 2l-9 9" stroke="#1b6aa5" strokeWidth="1.600" /><circle cx="6.500" cy="6.500" r="1.800" fill="#fff" /></svg>
        </div>
        <div className="mt-[9px] h-[21px] flex items-center shrink-0">
          <span className="w-[66px]">Save as:</span>
          <div className="w-[393px] h-full border border-[#d0d0d0] flex items-center overflow-hidden whitespace-nowrap">
            <span>/hat%27sNew26/Samples/AI_Positron/how_do_i_change_my_password.dita</span>
            <svg width="9" height="5" viewBox="0 0 9 5" className="ml-auto mr-[6px] shrink-0" fill="none"><path d="m.5.500 4 4 4-4" stroke="#555" /></svg>
          </div>
          <div className="ml-[10px]"><svg width="14" height="12" viewBox="0 0 14 12"><path d="M.5 11.500V.5h5l1.500 1.500h6.500v9.500z" fill="#fbdf98" stroke="#b9842c" /><path d="M1 5h12v2H1z" fill="#fff0c4" /></svg></div>
          <div className="ml-[9px]"><Dd /></div>
        </div>
        <div className="mt-[21px] h-[21px] flex items-center shrink-0">
          <svg width="16" height="16" viewBox="0 0 16 16" className="ml-[3px]" fill="none"><circle cx="8" cy="8" r="7.300" stroke="#6a7a8a" strokeWidth="1.200" /><text x="8" y="12" textAnchor="middle" fontFamily="Liberation Sans" fontWeight="700" fontSize="11" fill="#5a88b8">?</text></svg>
          <div className="ml-auto w-[62px] h-[21px] bg-[#e1e1e1] border-2 border-[#0078d7] flex items-center justify-center">Create</div>
          <div className="ml-[10px] mr-[3px] w-[62px] h-[21px] bg-[#e1e1e1] border border-[#adadad] flex items-center justify-center">Cancel</div>
        </div>
      </div>
    </div>
  );
}
